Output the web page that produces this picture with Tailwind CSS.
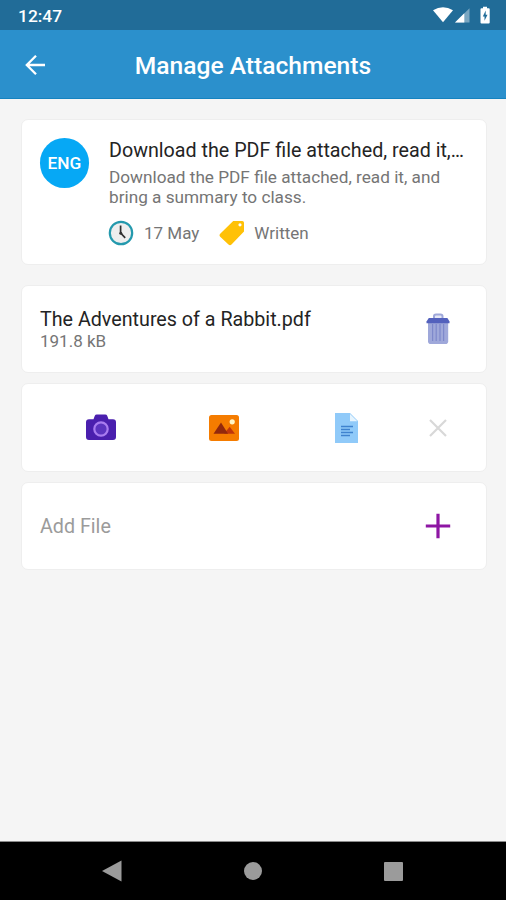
<!DOCTYPE html>
<html lang="en">
<head>
<meta charset="utf-8">
<meta name="viewport" content="width=device-width, initial-scale=1">
<title>Manage Attachments</title>
<script src="https://cdn.jsdelivr.net/npm/@tailwindcss/browser@4"></script>
</head>
<body class="bg-[#f5f5f5]">
<div class="flex h-[900px] w-[506px] flex-col overflow-hidden font-['Roboto',sans-serif]">
  <div class="flex h-[30px] shrink-0 items-center justify-between bg-[#216c98] pl-[18px] pr-[15px] text-white">
    <span class="pt-[2px] text-[17.4px] font-medium leading-5">12:47</span>
    <svg class="h-[18px] w-[58px]" viewBox="0 0 58 18" fill="#fff">
      <path d="M0 4.2Q10 -1.6 20 4.2L10 16.3Z"/>
      <path d="M36.5 2.2V16.6H22Z" opacity=".4"/>
      <path d="M31.3 7.3V16.6H22Z"/>
      <path fill-rule="evenodd" d="M48.5 2.2H50V.8h4v1.4h1.7q1 0 1 1v13.2q0 1-1 1h-7.2q-1 0-1-1V3.2q0-1 1-1ZM52.7 4.6 49.8 10.4H51.5V14.8L54.5 8.7H52.7Z"/>
    </svg>
  </div>
  <header class="grid h-[69px] shrink-0 grid-cols-[66px_1fr_66px] items-center border-b border-[#1583c0] bg-[#2b90cc] text-white">
    <svg class="ml-[25px] mt-px h-5 w-5" viewBox="0 0 20 20" fill="none" stroke="#fff" stroke-width="2.3"><path d="M20 10H2M11 .8 1.8 10l9.2 9.2"/></svg>
    <h1 class="whitespace-nowrap pt-[3px] text-center text-[24.6px] font-medium leading-7">Manage Attachments</h1>
  </header>
  <main class="flex grow flex-col pl-[21px] pr-[19px] pt-5">
    <section class="flex h-[146px] rounded-[7px] border border-[#eeeeee] bg-white pl-[18px] pt-[18px]">
      <div class="flex h-[50px] w-[49px] shrink-0 items-center justify-center rounded-full bg-[#06a8f5] pt-px text-[17.3px] font-medium text-white">ENG</div>
      <div class="ml-5 whitespace-nowrap">
        <h2 class="pt-px text-[19.7px] leading-6 text-[#242424]">Download the PDF file attached, read it,…</h2>
        <p class="mt-1 text-[17.2px] leading-5 text-[#757575]">Download the PDF file attached, read it, and<br>bring a summary to class.</p>
        <div class="mt-[13px] flex items-center text-[17px] leading-6 text-[#757575]">
          <svg class="-ml-px h-[26px] w-[26px]" viewBox="0 0 26 26"><circle cx="13" cy="13" r="11.2" fill="#eeeeee" stroke="#2499ad" stroke-width="2.2"/><path d="M12.6 5.5V13L17.2 17.8" fill="none" stroke="#303030" stroke-width="1.7"/><circle cx="12.8" cy="13.2" r="1.5" fill="#303030"/></svg>
          <span class="ml-[10px]">17 May</span>
          <svg class="ml-5 h-[26px] w-[26px]" viewBox="0 0 26 26"><path fill="#ffc107" fill-rule="evenodd" d="M14.2 1H23.2Q25 1 25 2.8V11.4L12.5 24.5Q11 26 9.5 24.5L1.2 16.8Q-.2 15.2 1.2 13.8ZM21 3.2a1.6 1.6 0 1 0 0 3.2a1.6 1.6 0 1 0 0-3.2Z"/></svg>
          <span class="ml-[9px]">Written</span>
        </div>
      </div>
    </section>
    <section class="mt-5 flex h-[88px] items-center justify-between rounded-[7px] border border-[#eeeeee] bg-white pl-[18px] pr-[35px]">
      <div class="pt-px">
        <h2 class="text-[19.7px] leading-6 text-[#242424]">The Adventures of a Rabbit.pdf</h2>
        <p class="-mt-px text-[17px] leading-5 text-[#757575]">191.8 kB</p>
      </div>
      <svg class="h-8 w-[26px]" viewBox="0 0 26 32"><path d="M9 5V3.3Q9 1.5 11 1.5h4.5Q17.5 1.5 17.5 3.3V5" fill="#e4e7f5" stroke="#9fa8da" stroke-width="2"/><path d="M3 8H23.2V28.2Q23.2 31 20.4 31H5.8Q3 31 3 28.2Z" fill="#9fa8da"/><path d="M7.6 11V28M11.2 11V28M15 11V28M18.6 11V28" stroke="#7e89cb" stroke-width="1.2"/><path d="M3.8 5H22.4L24.5 8.4V10.3H1.5V8.4Z" fill="#5361bd"/></svg>
    </section>
    <section class="mt-[10px] flex h-[89px] items-center rounded-[7px] border border-[#eeeeee] bg-white pl-[64px] pr-[39px]">
      <svg class="h-[27px] w-[30px]" viewBox="0 0 30 27"><path d="M7.5 5.2 8.8 1.8Q9.3.5 10.8.5h8.4q1.5 0 2 1.3l1.3 3.4H27q3 0 3 3V23q0 3-3 3H3q-3 0-3-3V8.2q0-3 3-3Z" fill="#4a1fae"/><circle cx="15" cy="15" r="6.7" fill="#5c34c0" stroke="#a97cf0" stroke-width="2.2"/></svg>
      <svg class="ml-[93px] h-[26px] w-[30px]" viewBox="0 0 30 26"><rect width="30" height="26" rx="2.5" fill="#f57c00"/><path d="M15 18.8 20.7 11.8 26 18.8Z" fill="#bf360c"/><path d="M4.5 18.8 12 7.5 19 18.8Z" fill="#93290c"/><circle cx="23.2" cy="6.8" r="2.6" fill="#fff6c7"/></svg>
      <svg class="ml-[96px] h-[30px] w-[23px]" viewBox="0 0 23 30"><path d="M0 0H15L23 8V30H0Z" fill="#90caf9"/><path d="M15 1V8.3H22.3Z" fill="#e5f4fe"/><path d="M6 13.4H18M6 16.4H15M6 19.6H18M6 22.6H15" stroke="#3f83cf" stroke-width="1.5"/></svg>
      <svg class="ml-auto h-[18px] w-[18px]" viewBox="0 0 18 18" stroke="#d8d8d8" stroke-width="2.2"><path d="M1 1 17 17M17 1 1 17"/></svg>
    </section>
    <section class="mt-[10px] flex h-[88px] items-center justify-between rounded-[7px] border border-[#eeeeee] bg-white pl-[18px] pr-[35px]">
      <span class="pt-px text-[19.7px] text-[#9b9b9b]">Add File</span>
      <svg class="h-[26px] w-[26px]" viewBox="0 0 26 26" stroke="#8e16a4" stroke-width="3.2"><path d="M13 .8V25.2M.8 13H25.2"/></svg>
    </section>
  </main>
  <nav class="flex h-[59px] shrink-0 items-center border-t border-[#8b8b8b] bg-black pl-[102px]">
    <svg class="h-[22px] w-5" viewBox="0 0 20 22" fill="#9b9b9b"><path d="M0 11 19.5 .5V21.5Z"/></svg>
    <div class="ml-[122px] h-[18px] w-[18px] rounded-full bg-[#9b9b9b]"></div>
    <div class="ml-[122px] h-[19px] w-[19px] rounded-[1px] bg-[#9b9b9b]"></div>
  </nav>
</div>
</body>
</html>
